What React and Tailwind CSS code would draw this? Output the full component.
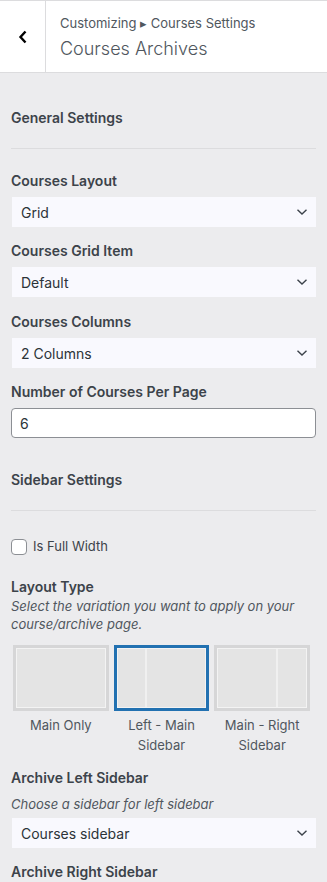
import React, { useState } from 'react';

const Chevron = () => (
  <svg width="12" height="8" viewBox="0 0 12 8" className="shrink-0">
    <path d="M1.5 1.8 L6 6 L10.5 1.8" fill="none" stroke="#3c434a" strokeWidth="1.4" />
  </svg>
);

const SelectBox = ({ value, className = '' }) => (
  <div className={`h-[30px] bg-[#f9f9fe] flex items-center justify-between pl-[9px] pr-[8px] ml-[1px] text-[14px] text-[#2c3338] ${className}`}>
    <span>{value}</span>
    <Chevron />
  </div>
);

const Label = ({ children, className = '' }) => (
  <div className={`text-[14px] leading-[20px] font-semibold text-[#3c434a] ${className}`}>{children}</div>
);

const LayoutThumb = ({ selected, split }) => (
  <div className={`h-[66px] border-[3px] ${selected ? 'border-[#2271b1]' : 'border-[#d6d6d7]'} bg-[#d6d6d7]`}>
    <div className="h-full border border-[#f3f3f3] bg-[#e4e4e4] flex">
      {split === 'left' && <div className="w-[29px] border-r-2 border-[#f0f0f0]" />}
      {split === 'right' && <div className="flex-1 border-r-2 border-[#f0f0f0]" />}
      {split === 'right' && <div className="w-[28px]" />}
    </div>
  </div>
);

export default function App() {
  const [fullWidth, setFullWidth] = useState(false);
  const layouts = [
    { split: 'none', label: ['Main Only'] },
    { split: 'left', label: ['Left - Main', 'Sidebar'], selected: true },
    { split: 'right', label: ['Main - Right', 'Sidebar'] },
  ];

  return (
    <div className="w-[327px] h-[882px] overflow-hidden bg-[#ececee] font-['Inter',sans-serif]">
      {/* Header */}
      <div className="h-[73px] bg-white border-t border-b border-[#dcdcde] flex">
        <button className="w-[46px] border-r border-[#dcdcde] flex items-center justify-center">
          <svg width="10" height="14" viewBox="0 0 10 14">
            <path d="M7.5 1.5 L2.5 7 L7.5 12.5" fill="none" stroke="#000" strokeWidth="2.4" />
          </svg>
        </button>
        <div className="pl-[14px] pt-[13px]">
          <div className="text-[13px] leading-[18px] text-[#50575e]">Customizing ▸ Courses Settings</div>
          <div className="text-[18px] leading-[26px] font-light text-[#50575e] mt-[4px]">Courses Archives</div>
        </div>
      </div>

      <div className="px-[11px]">
        <Label className="mt-[35px]">General Settings</Label>
        <div className="mt-[20px] h-px bg-[#dcdcde]" />

        <Label className="mt-[22px]">Courses Layout</Label>
        <SelectBox value="Grid" className="mt-[6px]" />

        <Label className="mt-[14px]">Courses Grid Item</Label>
        <SelectBox value="Default" className="mt-[6px]" />

        <Label className="mt-[15px]">Courses Columns</Label>
        <SelectBox value="2 Columns" className="mt-[6px]" />

        <Label className="mt-[14px]">Number of Courses Per Page</Label>
        <div className="mt-[6px] h-[30px] bg-white border border-[#8c8f94] rounded-[4px] flex items-center pl-[8px] text-[14px] text-[#2c3338]">6</div>

        <Label className="mt-[32px]">Sidebar Settings</Label>
        <div className="mt-[20px] h-px bg-[#dcdcde]" />

        <label className="mt-[28px] flex items-center gap-[6px] h-[16px]">
          <span
            onClick={() => setFullWidth(!fullWidth)}
            className="w-[16px] h-[16px] bg-white border border-[#8c8f94] rounded-[4px]"
          />
          <span className="text-[13px] text-[#3c434a]">Is Full Width</span>
        </label>

        <Label className="mt-[22px]">Layout Type</Label>
        <div className="text-[13px] leading-[18px] italic text-[#50575e]">
          Select the variation you want to apply on your course/archive page.
        </div>

        <div className="mt-[12px] grid grid-cols-3 gap-[5px] pl-[2px] pr-[6px]">
          {layouts.map((l, i) => (
            <div key={i}>
              <LayoutThumb selected={l.selected} split={l.split} />
              <div className="mt-[4px] text-center text-[13px] leading-[20px] text-[#50575e]">
                {l.label.map((t, j) => (
                  <div key={j}>{t}</div>
                ))}
              </div>
            </div>
          ))}
        </div>

        <Label className="mt-[13px]">Archive Left Sidebar</Label>
        <div className="mt-[7px] text-[13px] leading-[18px] italic text-[#50575e]">Choose a sidebar for left sidebar</div>
        <SelectBox value="Courses sidebar" className="mt-[5px]" />

        <Label className="mt-[14px]">Archive Right Sidebar</Label>
      </div>
    </div>
  );
}
